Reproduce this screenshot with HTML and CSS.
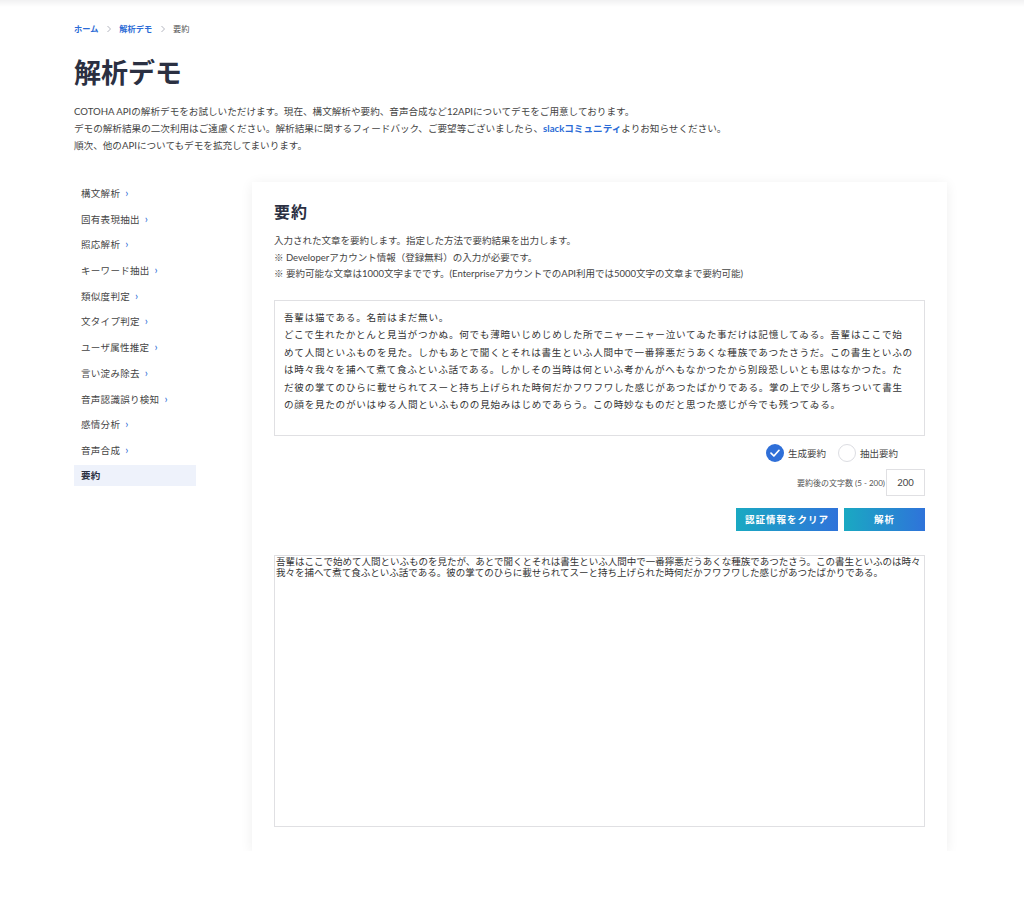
FILE: index.html
```html
<!DOCTYPE html>
<html lang="ja">
<head>
<meta charset="utf-8">
<title>解析デモ - 要約</title>
<link rel="stylesheet" href="styles.css">
</head>
<body>
<div class="topshade"></div>
<div class="page">
  <nav class="breadcrumb">
    <a class="crumb-link" href="#">ホーム</a>
    <svg class="crumb-sep" viewBox="0 0 6 8" width="6" height="8"><path d="M1.5 1 L4.5 4 L1.5 7" fill="none" stroke="#a9adb8" stroke-width="0.9"/></svg>
    <a class="crumb-link" href="#">解析デモ</a>
    <svg class="crumb-sep" viewBox="0 0 6 8" width="6" height="8"><path d="M1.5 1 L4.5 4 L1.5 7" fill="none" stroke="#a9adb8" stroke-width="0.9"/></svg>
    <span class="crumb-current">要約</span>
  </nav>
  <h1 class="title">解析デモ</h1>
  <p class="intro">COTOHA APIの解析デモをお試しいただけます。現在、構文解析や要約、音声合成など12APIについてデモをご用意しております。<br>デモの解析結果の二次利用はご遠慮ください。解析結果に関するフィードバック、ご要望等ございましたら、<a class="inline-link" href="#">slackコミュニティ</a>よりお知らせください。<br>順次、他のAPIについてもデモを拡充してまいります。</p>

  <div class="main">
    <ul class="sidebar">
      <li class="side-item">構文解析<span class="chev">›</span></li>
      <li class="side-item">固有表現抽出<span class="chev">›</span></li>
      <li class="side-item">照応解析<span class="chev">›</span></li>
      <li class="side-item">キーワード抽出<span class="chev">›</span></li>
      <li class="side-item">類似度判定<span class="chev">›</span></li>
      <li class="side-item">文タイプ判定<span class="chev">›</span></li>
      <li class="side-item">ユーザ属性推定<span class="chev">›</span></li>
      <li class="side-item">言い淀み除去<span class="chev">›</span></li>
      <li class="side-item">音声認識誤り検知<span class="chev">›</span></li>
      <li class="side-item">感情分析<span class="chev">›</span></li>
      <li class="side-item">音声合成<span class="chev">›</span></li>
      <li class="side-item active">要約</li>
    </ul>

    <section class="card">
      <h2 class="card-title">要約</h2>
      <p class="card-desc">入力された文章を要約します。指定した方法で要約結果を出力します。<br>※ Developerアカウント情報（登録無料）の入力が必要です。<br>※ 要約可能な文章は1000文字までです。(EnterpriseアカウントでのAPI利用では5000文字の文章まで要約可能)</p>
      <div class="input-text" role="textbox" aria-multiline="true">吾輩は猫である。名前はまだ無い。<br>どこで生れたかとんと見当がつかぬ。何でも薄暗いじめじめした所でニャーニャー泣いてゐた事だけは記憶してゐる。吾輩はここで始<br>めて人間といふものを見た。しかもあとで聞くとそれは書生といふ人間中で一番獰悪だうあくな種族であつたさうだ。この書生といふの<br>は時々我々を捕へて煮て食ふといふ話である。しかしその当時は何といふ考かんがへもなかつたから別段恐しいとも思はなかつた。た<br>だ彼の掌てのひらに載せられてスーと持ち上げられた時何だかフワフワした感じがあつたばかりである。掌の上で少し落ちついて書生<br>の顔を見たのがいはゆる人間といふものの見始みはじめであらう。この時妙なものだと思つた感じが今でも残つてゐる。</div>

      <div class="options">
        <label class="radio">
          <span class="radio-mark checked">
            <svg viewBox="0 0 18 18" width="18" height="18"><circle cx="9" cy="9" r="9" fill="#2f6fd8"/><path d="M5 9.2 L7.9 12 L13 6.3" fill="none" stroke="#fff" stroke-width="1.7" stroke-linecap="round" stroke-linejoin="round"/></svg>
          </span>
          <span class="radio-label">生成要約</span>
        </label>
        <label class="radio">
          <span class="radio-mark"></span>
          <span class="radio-label">抽出要約</span>
        </label>
      </div>

      <div class="count-row">
        <span class="count-label">要約後の文字数 (5 - 200)</span>
        <input class="count-input" type="text" value="200">
      </div>

      <div class="actions">
        <button class="btn">認証情報をクリア</button>
        <button class="btn btn-run">解析</button>
      </div>

      <textarea class="result">吾輩はここで始めて人間といふものを見たが、あとで聞くとそれは書生といふ人間中で一番獰悪だうあくな種族であつたさう。この書生といふのは時々我々を捕へて煮て食ふといふ話である。彼の掌てのひらに載せられてスーと持ち上げられた時何だかフワフワした感じがあつたばかりである。</textarea>
    </section>
  </div>
</div>
</body>
</html>
```

FILE: styles.css
```css
* { box-sizing: border-box; }

html, body {
  margin: 0;
  padding: 0;
  background: #fff;
}

body {
  font-family: "Lato", "Noto Sans CJK JP", sans-serif;
  color: #3a3d4a;
}

.topshade {
  height: 7px;
  background: linear-gradient(#f1f1f2, #ffffff);
}

.page {
  padding: 15px 0 0 74px;
}

.breadcrumb {
  font-size: 8.2px;
  line-height: 14px;
  display: flex;
  align-items: center;
}

.crumb-link {
  color: #2b6bd6;
  font-weight: 700;
  text-decoration: none;
}

.crumb-sep {
  display: block;
  margin: 0 7px 0 8px;
}

.crumb-current {
  color: #555;
}

.title {
  margin: 17px 0 0;
  font-size: 27px;
  line-height: 40px;
  font-weight: 700;
  color: #2b3042;
}

.intro {
  margin: 10px 0 0;
  font-size: 9.6px;
  line-height: 17px;
  color: #444;
}

.inline-link {
  color: #2b6bd6;
  font-weight: 700;
  text-decoration: none;
}

.main {
  display: flex;
  align-items: flex-start;
  margin-top: 28px;
}

.sidebar {
  list-style: none;
  margin: 0;
  padding: 0;
  width: 122px;
  margin-right: 56px;
}

.side-item {
  height: 21px;
  line-height: 21px;
  padding-left: 7px;
  margin-bottom: 4.7px;
  font-size: 9.5px;
  color: #444;
  letter-spacing: 0.3px;
}

.side-item.active {
  background: #eef2fb;
  font-weight: 700;
  color: #2b3042;
}

.chev {
  color: #2b6bd6;
  margin-left: 5px;
  font-size: 11px;
}

.card {
  width: 695px;
  background: #fff;
  box-shadow: 0 2px 12px rgba(0, 0, 0, 0.07);
  padding: 18px 22px 24px;
  display: flex;
  flex-direction: column;
}

.card-title {
  margin: 0;
  font-size: 16px;
  line-height: 24px;
  font-weight: 700;
  color: #2b3042;
  letter-spacing: 1px;
}

.card-desc {
  margin: 9px 0 0;
  font-size: 9.5px;
  line-height: 16.5px;
  color: #444;
}

.input-text {
  margin-top: 17px;
  width: 651px;
  height: 136px;
  border: 1px solid #e0e0e3;
  padding: 8px 9px;
  font-family: "Noto Sans CJK JP", sans-serif;
  font-size: 9.6px;
  letter-spacing: 0.73px;
  line-height: 17.5px;
  color: #333;
  white-space: nowrap;
  overflow: hidden;
}

.options {
  display: flex;
  justify-content: flex-end;
  align-items: center;
  gap: 12px;
  margin-top: 8px;
  padding-right: 27px;
}

.radio {
  display: flex;
  align-items: center;
  gap: 4px;
}

.radio-mark {
  width: 18px;
  height: 18px;
  border-radius: 50%;
  border: 1px solid #dcdde2;
  background: #fff;
  display: block;
}

.radio-mark.checked {
  border: none;
}

.radio-mark svg {
  display: block;
}

.radio-label {
  font-size: 9.5px;
  color: #444;
}

.count-row {
  display: flex;
  justify-content: flex-end;
  align-items: center;
  margin-top: 7px;
}

.count-label {
  font-size: 8px;
  color: #555;
  margin-right: 1px;
}

.count-input {
  width: 39px;
  height: 27px;
  border: 1px solid #e0e0e3;
  text-align: center;
  font-family: "Lato", sans-serif;
  font-size: 9.5px;
  color: #444;
  padding: 0;
  outline: none;
}

.actions {
  display: flex;
  justify-content: flex-end;
  gap: 6px;
  margin-top: 12px;
}

.btn {
  height: 23px;
  width: 102px;
  border: none;
  color: #fff;
  font-family: "Noto Sans CJK JP", sans-serif;
  font-weight: 700;
  font-size: 9.5px;
  letter-spacing: 1px;
  background: linear-gradient(90deg, #1aa9c2, #2f73da);
  padding: 0;
}

.btn-run {
  width: 81px;
}

.result {
  display: block;
  margin-top: 24px;
  width: 651px;
  height: 272px;
  border: 1px solid #e0e0e3;
  padding: 0 0 0 1px;
  font-family: "Noto Sans CJK JP", sans-serif;
  font-size: 9.5px;
  line-height: 11px;
  color: #333;
  resize: none;
  outline: none;
}
```
